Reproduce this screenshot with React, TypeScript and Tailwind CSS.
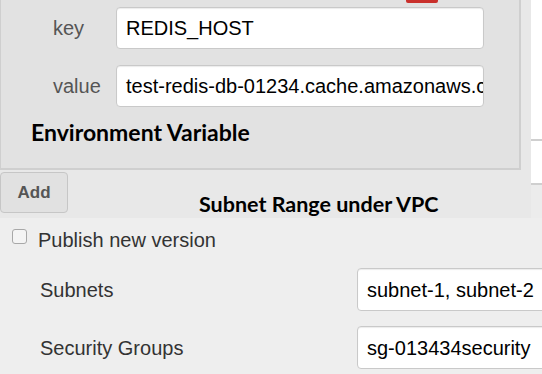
import React from 'react';

const SANS = "font-['Liberation_Sans',Arial,sans-serif]";
const NOTE = "font-['Lato','Open_Sans',sans-serif] font-bold text-black";

interface FieldProps {
  value: string;
  className?: string;
}

// Bootstrap-ish text box, rendered as static text
const Field: React.FC<FieldProps> = ({ value, className = '' }) => (
  <div
    className={`flex items-center bg-white border border-[#c9c9c9] rounded-[4px] shadow-[inset_0_1px_1px_rgba(0,0,0,0.08)] pl-[9px] overflow-hidden whitespace-nowrap text-[20px] text-black ${className}`}
  >
    {value}
  </div>
);

const ENV_ROWS = [
  { label: 'key', value: 'REDIS_HOST', gap: 'mt-[4px]' },
  { label: 'value', value: 'test-redis-db-01234.cache.amazonaws.com', gap: 'mt-[16px]' },
];

const VPC_ROWS = [
  { label: 'Subnets', value: 'subnet-1, subnet-2', gap: 'mt-[16px]' },
  { label: 'Security Groups', value: 'sg-013434security', gap: 'mt-[15px]' },
];

const App: React.FC = () => {
  return (
    <div className={`w-[542px] h-[374px] overflow-hidden ${SANS}`}>
      {/* Upper shot: environment variable panel */}
      <div className="h-[218px] flex bg-[#e8e8e8] overflow-hidden">
        <div className="w-[531px] flex flex-col">
          <div className="w-[521px] h-[171px] bg-[#e2e2e2] border-l border-r-2 border-b-2 border-[#cfcfcf] flex flex-col">
            <div className="h-[3px] w-[32px] ml-[405px] bg-[#c9302c] rounded-b-[2px]" />
            {ENV_ROWS.map((row) => (
              <div key={row.label} className={`flex items-center ${row.gap}`}>
                <span className="w-[115px] pl-[52px] text-[20px] text-[#555]">{row.label}</span>
                <Field value={row.value} className="w-[368px] h-[42px]" />
              </div>
            ))}
            <div className={`mt-[11px] pl-[30px] text-[23px] leading-[28px] ${NOTE}`}>
              Environment Variable
            </div>
          </div>

          <div className="mt-[2px] flex items-start">
            <button className="w-[68px] h-[41px] bg-[#e1e1e1] border border-[#c6c6c6] rounded-[4px] text-[17px] font-bold text-[#555]">
              Add
            </button>
            <span className={`ml-[131px] mt-[19px] text-[21.5px] leading-[27px] ${NOTE}`}>
              Subnet Range under VPC
            </span>
          </div>
        </div>

        {/* Edge of the neighbouring page */}
        <div className="w-[11px] flex flex-col">
          <div className="h-[139px] bg-white" />
          <div className="h-[2px] bg-[#cfcfcf]" />
          <div className="h-[42px] bg-white" />
          <div className="h-[2px] bg-[#cfcfcf]" />
          <div className="flex-1 bg-[#ececec]" />
        </div>
      </div>

      {/* Lower shot: publish + VPC settings */}
      <div className="h-[156px] bg-[#eeeeee] flex flex-col overflow-hidden">
        <div className="mt-[10px] flex items-start pl-[12px]">
          <span className="mt-[1px] w-[15px] h-[15px] rounded-[3px] border border-[#a8a8a8] bg-[#f4f4f4]" />
          <span className="ml-[11px] text-[20px] leading-[24px] text-[#333]">Publish new version</span>
        </div>
        {VPC_ROWS.map((row) => (
          <div key={row.label} className={`flex items-center ${row.gap}`}>
            <span className="w-[357px] shrink-0 pl-[40px] text-[20px] text-[#333]">{row.label}</span>
            <Field value={row.value} className="w-[220px] shrink-0 h-[43px]" />
          </div>
        ))}
      </div>
    </div>
  );
};

export default App;
